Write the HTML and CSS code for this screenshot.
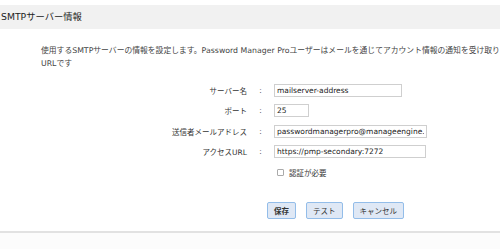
FILE: index.html
```html
<!DOCTYPE html>
<html lang="ja">
<head>
    <meta charset="UTF-8">
    <title>SMTPサーバー情報</title>
    <link rel="stylesheet" href="styles.css">
</head>
<body>
    <!-- Section header -->
    <div class="section-title">SMTPサーバー情報</div>

    <p class="description">使用するSMTPサーバーの情報を設定します。Password Manager Proユーザーはメールを通じてアカウント情報の通知を受け取り<br>URLです</p>

    <!-- SMTP form -->
    <form class="smtp-form">
        <label for="server">サーバー名</label>
        <span class="colon">:</span>
        <div><input id="server" class="field field-server" type="text" value="mailserver-address"></div>

        <label for="port">ポート</label>
        <span class="colon">:</span>
        <div><input id="port" class="field field-port" type="text" value="25"></div>

        <label for="sender">送信者メールアドレス</label>
        <span class="colon">:</span>
        <div><input id="sender" class="field field-mail" type="text" value="passwordmanagerpro@manageengine.com"></div>

        <label for="url">アクセスURL</label>
        <span class="colon">:</span>
        <div><input id="url" class="field field-url" type="text" value="https://pmp-secondary:7272"></div>

        <span></span>
        <span></span>
        <div class="auth-row">
            <input id="auth" class="check" type="checkbox">
            <label for="auth">認証が必要</label>
        </div>
    </form>

    <div class="button-row">
        <button class="btn btn-primary" type="button">保存</button>
        <button class="btn" type="button">テスト</button>
        <button class="btn" type="button">キャンセル</button>
    </div>

    <div class="footer"></div>
</body>
</html>
```

FILE: styles.css
```css
body {
    margin: 0;
    font-family: "DejaVu Sans", "Noto Sans CJK JP", sans-serif;
    font-size: 7.5px;
    color: #333;
    background-color: white;
    overflow: hidden;
}

/* Header band */
.section-title {
    margin-top: 5px;
    height: 24px;
    line-height: 24px;
    padding-left: 1px;
    font-size: 9.3px;
    color: #222;
    background-color: #f1f1f1;
    white-space: nowrap;
}

.description {
    margin: 15px 0 0;
    padding-left: 41px;
    font-size: 7.8px;
    line-height: 13px;
    color: #444;
    white-space: nowrap;
}

/* Form grid */
.smtp-form {
    display: grid;
    grid-template-columns: 247px 27px auto;
    grid-auto-rows: 20.5px;
    align-items: center;
    margin-top: 10px;
}

.smtp-form > label {
    text-align: right;
    color: #333;
}

.colon {
    text-align: center;
    color: #555;
}

.field {
    box-sizing: border-box;
    display: block;
    height: 13px;
    margin: 0;
    padding: 0 2px;
    font-family: inherit;
    font-size: 7.5px;
    color: #222;
    border: 1px solid #cfcfcf;
    border-radius: 0;
    background-color: white;
    outline: none;
}

.field-server { width: 128px; }
.field-port { width: 35px; }
.field-mail { width: 153px; }
.field-url { width: 152px; }

.auth-row {
    display: flex;
    align-items: center;
    gap: 5px;
    padding-left: 3px;
}

.check {
    appearance: none;
    width: 7px;
    height: 7px;
    margin: 0;
    border: 1px solid #aaa;
    border-radius: 1px;
    background-color: white;
}

/* Buttons */
.button-row {
    display: flex;
    gap: 10px;
    margin-top: 19px;
    padding-left: 267px;
}

.btn {
    height: 17px;
    padding: 0 6px;
    font-family: inherit;
    font-size: 7.5px;
    color: #333;
    background-color: #dfe8f5;
    border: 1px solid #93bde9;
    border-radius: 2px;
}

.btn-primary {
    font-weight: bold;
}

.footer {
    margin-top: 12px;
    height: 20px;
    border-top: 2px solid #e2e2e2;
    background-color: #fcfcfc;
}
```
